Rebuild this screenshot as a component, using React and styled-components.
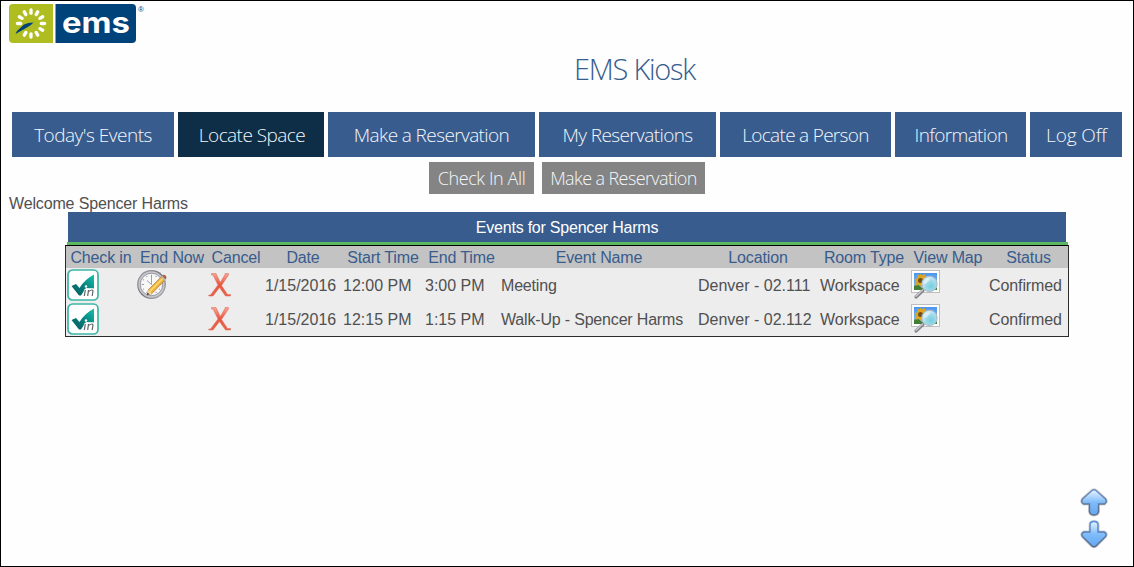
import React from "react";
import styled, { createGlobalStyle } from "styled-components";

const GlobalStyle = createGlobalStyle`
  * { box-sizing: border-box; }
  body {
    margin: 0;
    background: #fefefe;
    color: #505050;
    font: 16px/18px "Liberation Sans", Arial, sans-serif;
  }
  svg { display: block; }
`;

const BLUE = "#385c8e";

const Page = styled.div`
  width: 1134px;
  height: 567px;
  border: 1px solid #000;
  background: #fefefe;
  display: flex;
  flex-direction: column;
  overflow: hidden;
`;

const Header = styled.header`
  height: 111px;
  display: flex;
  padding-left: 8px;
`;

const Brand = styled.div`
  width: 140px;
  padding-top: 3px;
`;

const Title = styled.h1`
  margin: 50px 0 0 425px;
  font: 300 29px/36px "Open Sans", "Noto Sans", sans-serif;
  letter-spacing: -1.25px;
  color: ${BLUE};
  white-space: nowrap;
`;

const Nav = styled.nav`
  display: flex;
  gap: 4px;
  padding-left: 11px;
`;

const NavButton = styled.button`
  width: ${(p) => p.$width}px;
  height: 45px;
  border: 0;
  padding: 0 0 0 ${(p) => p.$shift || 0}px;
  background: ${(p) => (p.$active ? "#0d2e46" : BLUE)};
  color: #f4f7fb;
  font: 300 19px/28px "Open Sans", "Noto Sans", sans-serif;
  letter-spacing: ${(p) => p.$spacing || 0}px;
  white-space: nowrap;
`;

const Actions = styled.div`
  display: flex;
  gap: 8px;
  padding: 5px 0 0 428px;
`;

const ActionButton = styled(NavButton)`
  height: 32px;
  background: #848484;
  font-size: 18px;
`;

const Welcome = styled.p`
  margin: 0;
  padding: 1px 0 0 8px;
  height: 18px;
  line-height: 17px;
  letter-spacing: -0.15px;
`;

const Events = styled.section`
  width: 1004px;
  margin-left: 64px;
`;

const EventsTitle = styled.h2`
  margin: 0 3px;
  height: 30px;
  background: ${BLUE};
  color: #fff;
  font-size: 16px;
  font-weight: 400;
  line-height: 31px;
  letter-spacing: -0.22px;
  text-align: center;
`;

const Accent = styled.div`
  height: 3px;
  margin: 0 1px 0 2px;
  background: #5cb860;
`;

const Table = styled.div`
  border: 1px solid #2b2b2b;
  border-top-color: #000;
  background: #ededed;
`;

const Row = styled.div`
  display: grid;
  grid-template-columns: 70px 71px 57px 78px 82px 75px 199px 120px 92px 76px 82px;
  height: 34px;
  align-items: center;
`;

const HeadRow = styled(Row)`
  height: 22px;
  padding-top: 2px;
  background: #c3c3c3;
  color: ${BLUE};
  text-align: center;
`;

const Cell = styled.div`
  padding-left: ${(p) => p.$inset}px;
  white-space: nowrap;
`;

const TextCell = styled(Cell)`
  padding-top: 2px;
  letter-spacing: ${(p) => p.$spacing || 0}px;
`;

const HeadCell = styled.div`
  padding-left: ${(p) => p.$inset || 0}px;
  letter-spacing: -0.15px;
  white-space: nowrap;
`;

const Scroller = styled.div`
  margin: auto 25px 17px auto;
  display: flex;
  flex-direction: column;
  gap: 3px;
`;

function Logo() {
  const rays = Array.from({ length: 12 }, (_, i) => i * 30).filter((a) => a !== 240);
  return (
    <svg width="138" height="40" viewBox="0 0 138 40">
      <path d="M4 0H44V39H4Q0 39 0 35V4Q0 0 4 0Z" fill="#afbd21" />
      <path d="M46.500 0H123Q127 0 127 4V35Q127 39 123 39H46.500Z" fill="#00427a" />
      <g stroke="#fff" strokeWidth="3.300" strokeLinecap="round">
        {rays.map((a) => (
          <line key={a} x1="22" y1="9.200" x2="22" y2="6" transform={`rotate(${a} 22 19.500)`} />
        ))}
      </g>
      <path d="M6.500 30L8 27L15 20.500Q19 18.500 24.500 18.500Q22 21.500 18 23.500Z" fill="#00427a" />
      <text x="53" y="28.500" textLength="68" lengthAdjust="spacingAndGlyphs" fill="#fff" fontFamily="Inter, sans-serif" fontWeight="700" fontSize="28">ems</text>
      <text x="129" y="8" fill="#00427a" fontFamily="Liberation Sans, sans-serif" fontSize="8">®</text>
    </svg>
  );
}

function CheckInIcon() {
  return (
    <svg width="32" height="32" viewBox="0 0 32 32">
      <defs>
        <linearGradient id="tick" x1="0" y1="1" x2="1" y2="0">
          <stop offset="0" stopColor="#075a5c" />
          <stop offset="0.450" stopColor="#087b7a" />
          <stop offset="1" stopColor="#14c4ad" />
        </linearGradient>
      </defs>
      <rect x="1" y="1" width="30" height="30" rx="4.500" fill="#fff" stroke="#3cb5a7" strokeWidth="1.700" />
      <path d="M4.500 17L9 15L12.500 19Q17.500 10.500 27 5.500V19.500L19 19L14 26.500H12Z" fill="url(#tick)" />
      <g fill="none" stroke="#fff" strokeWidth="2.400"><path d="M18.300 20.500L17.300 27.500M20.700 27.500L21.500 21.500Q26.500 19.500 26 22.500L25.300 27.500" /></g>
      <circle cx="19" cy="17.500" r="1.200" fill="#fff" />
      <g fill="none" stroke="#606468" strokeWidth="1.200"><path d="M18.300 21L17.300 27M20.700 27L21.500 21M21.400 22.500Q26.200 19.500 25.900 22.500L25.200 27" /></g>
    </svg>
  );
}

function EndNowIcon() {
  const ticks = Array.from({ length: 12 }, (_, i) => i * 30);
  return (
    <svg width="30" height="32" viewBox="0 0 30 32">
      <defs>
        <linearGradient id="rim" x1="0" y1="0" x2="1" y2="1">
          <stop offset="0" stopColor="#a9a9ad" />
          <stop offset="0.500" stopColor="#717179" />
          <stop offset="1" stopColor="#b5b5b9" />
        </linearGradient>
      </defs>
      <circle cx="14.500" cy="15.500" r="14.400" fill="url(#rim)" />
      <circle cx="14.500" cy="15.500" r="13.200" fill="#c5c5cb" />
      <circle cx="14.500" cy="15.500" r="11.200" fill="#f8f8f8" stroke="#777982" strokeWidth="0.700" />
      <g stroke="#8b8d96" strokeWidth="0.900">
        {ticks.map((a) => (
          <line key={a} x1="14.500" y1="5.700" x2="14.500" y2={a % 90 ? 6.900 : 8} transform={`rotate(${a} 14.500 15.500)`} />
        ))}
      </g>
      <path d="M14.500 15.500V8M14.500 15.500L10 11.500" stroke="#999" strokeWidth="0.900" />
      <path d="M10 26L11.500 20.500L24.500 7.500L28 11L15 24.500Z" fill="#efb239" stroke="#a56c20" strokeWidth="0.600" />
      <path d="M12.500 21.500L25.500 8.700L26.500 9.700L13.500 22.700Z" fill="#ffdb77" />
      <path d="M24.700 7.500L26.500 5.800Q29.500 6 29.500 9L28 11Z" fill="#b65d43" />
      <path d="M23.700 8.300L25.200 6.900L28.800 10.400L27.500 11.700Z" fill="#b9b9b4" />
      <path d="M10 26L11.500 21L15 24.500Z" fill="#f4d7a4" />
      <path d="M10 26L10.600 23.800L12.500 25.300Z" fill="#292929" />
    </svg>
  );
}

function CancelIcon() {
  return (
    <svg width="24" height="32" viewBox="0 0 24 32">
      <defs>
        <linearGradient id="cross" x1="0" y1="0" x2="0" y2="1">
          <stop offset="0" stopColor="#f8a593" />
          <stop offset="0.500" stopColor="#e95640" />
          <stop offset="1" stopColor="#ea634b" />
        </linearGradient>
      </defs>
      <path d="M3.500 4.500H8L12.300 13.500L17 5.500V4.500H20.500V6L13.500 16.500L19.500 25.500H22.500V27H17.500L11.500 18.500L5 27H0.800V26H2.500L10 16L5 6H3.500Z" fill="url(#cross)" stroke="#de6552" strokeWidth="0.500" />
    </svg>
  );
}

function MapIcon() {
  return (
    <svg width="30" height="32" viewBox="0 0 30 32">
      <defs>
        <linearGradient id="sky" x1="0" y1="0" x2="0" y2="1">
          <stop offset="0" stopColor="#4d94ee" />
          <stop offset="1" stopColor="#87c9f5" />
        </linearGradient>
        <radialGradient id="lens" cx="0.600" cy="0.650" r="0.650">
          <stop offset="0" stopColor="#75cfe0" />
          <stop offset="0.650" stopColor="#a7dceb" />
          <stop offset="1" stopColor="#e4f5fa" />
        </radialGradient>
      </defs>
      <rect x="1.500" y="1.500" width="28" height="22" fill="#fff" stroke="#bebebe" />
      <rect x="4" y="4" width="23" height="17" fill="url(#sky)" />
      <path d="M4 17Q7 14 11 18L15 21H4ZM22 19L27 17V21H21Z" fill="#407f35" />
      <path d="M10 4.500L12 6.500L15 5L15.500 8L18 9L16 12L17 15L13.500 15L11.500 19L9.500 15.500L5.500 17L6.500 13L4.500 10.500L7.500 9L7.500 5.500L10 6.500Z" fill="#dfa51e" />
      <circle cx="10.500" cy="11.500" r="2.500" fill="#70501a" />
      <path d="M13 21.500L6 28" stroke="#85858e" strokeWidth="3.200" strokeLinecap="round" />
      <path d="M12.500 21L6 27.200" stroke="#c9c9cf" strokeWidth="1.300" strokeLinecap="round" />
      <circle cx="19.500" cy="15" r="7.600" fill="url(#lens)" stroke="#aebfca" strokeWidth="1.200" />
      <path d="M14 13.500Q15.500 9 20 9.500Q19.500 13 14 15.500Z" fill="#fff" opacity="0.500" />
    </svg>
  );
}

function ArrowIcon({ down }) {
  const id = down ? "arrow-down" : "arrow-up";
  const shape = down
    ? "M10 12V5Q10 1.500 14 1.500Q18 1.500 18 5V12L24 12Q27.500 13.500 25.500 16.500L16 26Q14 27.500 12 26L2.500 16.500Q0.500 13.500 4 12Z"
    : "M12 2.500Q14 1 16 2.500L25.500 11Q27.500 14 24.500 16H18.500V23.500Q18 27 14 27Q10 27 9.500 23.500V16H3.500Q0.500 14 2.500 11Z";
  return (
    <svg width="28" height="29" viewBox="0 0 28 29">
      <defs>
        <linearGradient id={id} x1="0" y1="0" x2="0" y2="1">
          <stop offset="0" stopColor="#e8f4ff" />
          <stop offset="0.500" stopColor="#80bcfa" />
          <stop offset="1" stopColor="#63a7f2" />
        </linearGradient>
        <linearGradient id={`${id}-edge`} x1="0" y1="0" x2="0" y2="1">
          <stop offset="0" stopColor={down ? "#538fe0" : "#6c8fc3"} />
          <stop offset="1" stopColor="#59687e" />
        </linearGradient>
      </defs>
      <path d={shape} fill="none" stroke="#cfd1d5" strokeWidth="3" />
      <path d={shape} fill={`url(#${id})`} stroke={`url(#${id}-edge)`} strokeWidth="1.400" />
    </svg>
  );
}

const navItems = [
  { label: "Today's Events", width: 162, spacing: -0.5 },
  { label: "Locate Space", width: 146, active: true, spacing: -0.55, shift: 2 },
  { label: "Make a Reservation", width: 207, spacing: -0.6 },
  { label: "My Reservations", width: 177, spacing: -0.6 },
  { label: "Locate a Person", width: 171, spacing: -0.7 },
  { label: "Information", width: 131, spacing: -0.65, shift: 1 },
  { label: "Log Off", width: 92, spacing: -0.1, shift: 1 },
];

const columns = [
  { label: "Check in" },
  { label: "End Now", inset: 1 },
  { label: "Cancel", inset: 1 },
  { label: "Date" },
  { label: "Start Time" },
  { label: "End Time" },
  { label: "Event Name", inset: 1 },
  { label: "Location" },
  { label: "Room Type" },
  { label: "View Map" },
  { label: "Status", inset: 3 },
];

const events = [
  { canEnd: true, date: "1/15/2016", start: "12:00 PM", end: "3:00 PM", name: "Meeting", location: "Denver - 02.111", type: "Workspace", status: "Confirmed" },
  { canEnd: false, date: "1/15/2016", start: "12:15 PM", end: "1:15 PM", name: "Walk-Up - Spencer Harms", location: "Denver - 02.112", type: "Workspace", status: "Confirmed" },
];

export default function App() {
  return (
    <>
      <GlobalStyle />
      <Page>
        <Header>
          <Brand><Logo /></Brand>
          <Title>EMS Kiosk</Title>
        </Header>
        <Nav>
          {navItems.map((n) => (
            <NavButton key={n.label} $width={n.width} $active={n.active} $spacing={n.spacing} $shift={n.shift}>{n.label}</NavButton>
          ))}
        </Nav>
        <Actions>
          <ActionButton $width={105} $spacing={-0.4}>Check In All</ActionButton>
          <ActionButton $width={163} $spacing={-0.6}>Make a Reservation</ActionButton>
        </Actions>
        <Welcome>Welcome Spencer Harms</Welcome>
        <Events>
          <EventsTitle>Events for Spencer Harms</EventsTitle>
          <Accent />
          <Table>
            <HeadRow>
              {columns.map((c) => <HeadCell key={c.label} $inset={c.inset}>{c.label}</HeadCell>)}
            </HeadRow>
            {events.map((e) => (
              <Row key={e.name}>
                <Cell $inset={1}><CheckInIcon /></Cell>
                <Cell $inset={1}>{e.canEnd && <EndNowIcon />}</Cell>
                <Cell $inset={1}><CancelIcon /></Cell>
                <TextCell $inset={1}>{e.date}</TextCell>
                <TextCell $inset={1}>{e.start}</TextCell>
                <TextCell $inset={1}>{e.end}</TextCell>
                <TextCell $inset={2} $spacing={-0.18}>{e.name}</TextCell>
                <TextCell $inset={0}>{e.location}</TextCell>
                <TextCell $inset={2}>{e.type}</TextCell>
                <Cell $inset={0}><MapIcon /></Cell>
                <TextCell $inset={3} $spacing={-0.1}>{e.status}</TextCell>
              </Row>
            ))}
          </Table>
        </Events>
        <Scroller>
          <ArrowIcon />
          <ArrowIcon down />
        </Scroller>
      </Page>
    </>
  );
}
